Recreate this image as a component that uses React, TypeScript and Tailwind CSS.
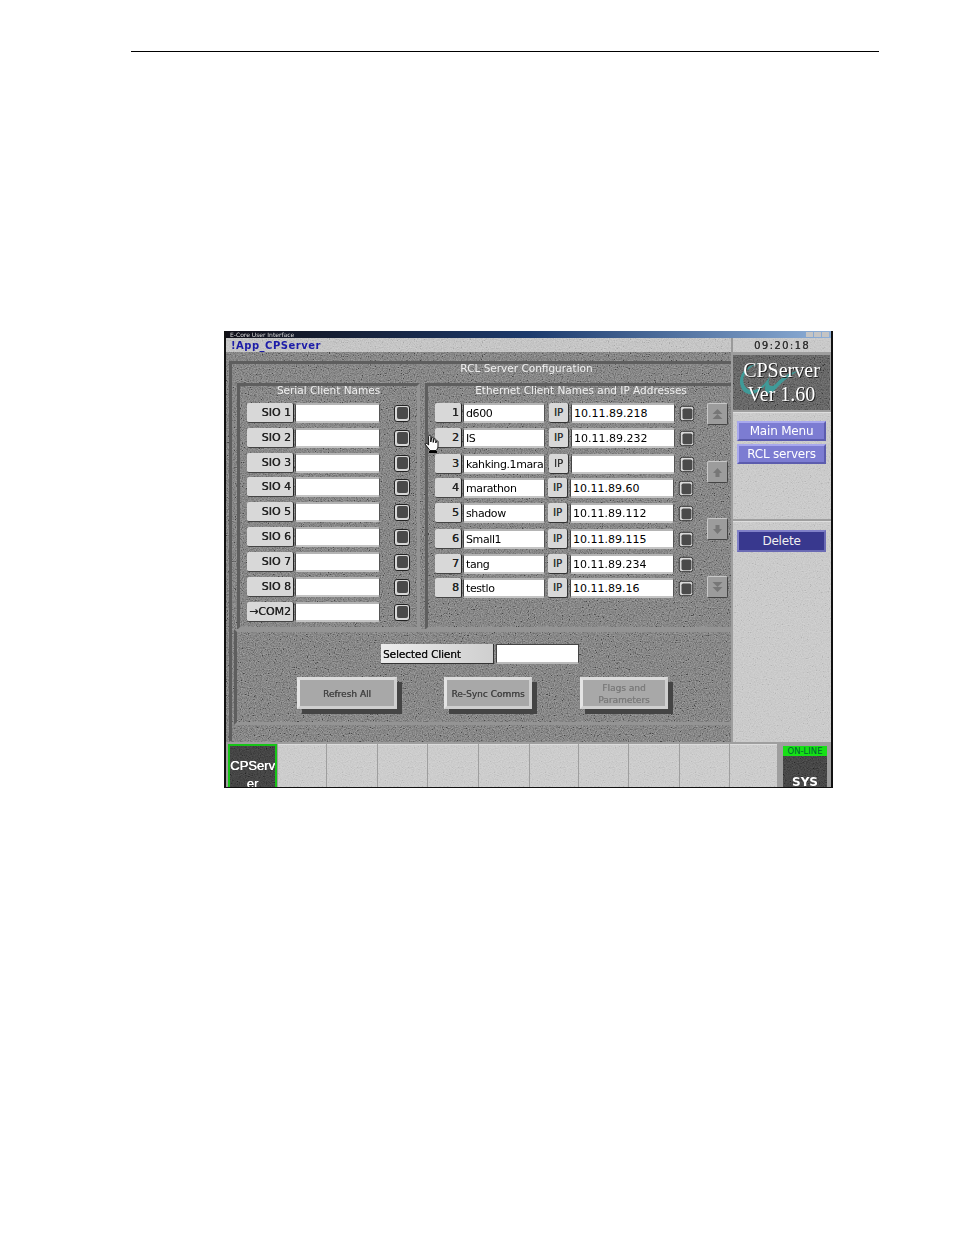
import React from 'react';

const FONT = "font-['DejaVu_Sans',sans-serif]";

const serialRows = [
  { label: 'SIO 1', mt: 'mt-0' },
  { label: 'SIO 2', mt: 'mt-[5px]' },
  { label: 'SIO 3', mt: 'mt-[5px]' },
  { label: 'SIO 4', mt: 'mt-[4px]' },
  { label: 'SIO 5', mt: 'mt-[5px]' },
  { label: 'SIO 6', mt: 'mt-[5px]' },
  { label: 'SIO 7', mt: 'mt-[5px]' },
  { label: 'SIO 8', mt: 'mt-[5px]' },
  { label: '→COM2', mt: 'mt-[5px]' },
];

const ethernetRows = [
  { n: 1, name: 'd600', ip: '10.11.89.218', mt: 'mt-0', ipMl: 'ml-[4px]' },
  { n: 2, name: 'IS', ip: '10.11.89.232', mt: 'mt-[5px]', ipMl: 'ml-[4px]' },
  { n: 3, name: 'kahking.1mara', ip: '', mt: 'mt-[6px]', ipMl: 'ml-[4px]' },
  { n: 4, name: 'marathon', ip: '10.11.89.60', mt: 'mt-[4px]', ipMl: 'ml-[3px]' },
  { n: 5, name: 'shadow', ip: '10.11.89.112', mt: 'mt-[5px]', ipMl: 'ml-[3px]' },
  { n: 6, name: 'Small1', ip: '10.11.89.115', mt: 'mt-[6px]', ipMl: 'ml-[3px]' },
  { n: 7, name: 'tang', ip: '10.11.89.234', mt: 'mt-[5px]', ipMl: 'ml-[3px]' },
  { n: 8, name: 'testlo', ip: '10.11.89.16', mt: 'mt-[4px]', ipMl: 'ml-[3px]' },
];

const Noise = ({ className = 'opacity-40' }: { className?: string }) => (
  <svg className={`absolute inset-0 w-full h-full pointer-events-none mix-blend-overlay ${className}`}>
    <rect width="100%" height="100%" filter="url(#grain)" />
  </svg>
);

const Led = () => (
  <div className="w-[16px] h-[17px] shrink-0 rounded-[3px] border border-[#222] bg-[#d8d8d8] flex items-center justify-center">
    <div className="w-[11px] h-[12px] rounded-[2px] bg-[#4a4a4a]" />
  </div>
);

const KeyLabel = ({ children, width }: { children: React.ReactNode; width: string }) => (
  <div className={`${width} h-[20px] shrink-0 rounded-[2px] bg-[#d8d8d8] border-r border-b border-r-[#222] border-b-[#444] flex items-center justify-end pr-[2px] pt-[2px] text-[11px] [text-shadow:0.3px_0_0_#222] text-[#222]`}>
    {children}
  </div>
);

const Field = ({ children, width, tight }: { children?: React.ReactNode; width: string; tight?: boolean }) => (
  <div className={`${width} h-[20px] shrink-0 rounded-[2px] bg-white border border-t-2 border-b-2 border-t-[#b4b4b4] border-l-[#444] border-r-[#555] border-b-[#c4c4c4] flex items-center pl-[2px] text-[11px] leading-none text-black whitespace-nowrap overflow-hidden ${tight ? 'tracking-[-0.4px]' : ''}`}>
    {children}
  </div>
);

const ScrollButton = ({ mt, children }: { mt: string; children: React.ReactNode }) => (
  <div className={`${mt} w-[21px] h-[22px] rounded-[2px] bg-[#9c9c9c] border border-t-[#c8c8c8] border-l-[#c8c8c8] border-r-[#444] border-b-[#444] flex items-center justify-center`}>
    <svg width="13" height="13" viewBox="0 0 13 13" fill="#777">{children}</svg>
  </div>
);

const ActionButton = ({ width, muted, children }: { width: string; muted?: boolean; children: React.ReactNode }) => (
  <div className={`${width} h-[32px] shrink-0 bg-[#a8a8a8] border-[3px] border-t-[#dcdcdc] border-l-[#e4e4e4] border-r-[#cfcfcf] border-b-[#cfcfcf] shadow-[5px_5px_0_#444] flex items-center justify-center pt-[2px] text-center text-[9px] leading-[12px] [text-shadow:0.3px_0_0_currentColor] ${muted ? 'text-[#7c7c7c]' : 'text-[#444]'}`}>
    {children}
  </div>
);

const MenuButton = ({ mt, dark, tall, children }: { mt: string; dark?: boolean; tall?: boolean; children: React.ReactNode }) => (
  <div className={`${mt} ml-[4px] w-[89px] ${tall ? 'h-[22px]' : 'h-[20px]'} border-2 flex items-center justify-center text-[12px] tracking-[-0.2px] ${dark ? 'bg-[#38388e] border-t-[#8080c8] border-l-[#8080c8] border-r-[#6a6ab4] border-b-[#6a6ab4] text-[#f0f0f0]' : 'bg-[#7c7cd2] border-t-[#a8a8ee] border-l-[#a8a8ee] border-r-[#5c5cae] border-b-[#5c5cae] text-white'}`}>
    {children}
  </div>
);

const blankTabs = ['w-[48px]', 'w-[50px]', 'w-[49px]', 'w-[50px]', 'w-[50px]', 'w-[48px]', 'w-[49px]', 'w-[50px]', 'w-[49px]', 'w-[47px]'];

export default function App() {
  return (
    <div className={`w-[954px] h-[1235px] bg-white overflow-hidden relative ${FONT}`}>
      <svg width="0" height="0" className="absolute">
        <filter id="grain">
          <feTurbulence type="fractalNoise" baseFrequency="0.85" numOctaves="2" seed="4" />
          <feColorMatrix values="0.9 0.9 0.9 0 -0.85 0.9 0.9 0.9 0 -0.85 0.9 0.9 0.9 0 -0.85 0 0 0 0 1" />
        </filter>
      </svg>

      <div className="mt-[51px] ml-[131px] w-[748px] h-px bg-black" />

      <div className="mt-[279px] ml-[224px] w-[609px] h-[457px] bg-[#9a9a9a] border-x-2 border-b border-[#111] flex flex-col overflow-hidden blur-[0.3px]">
        {/* window title */}
        <div className="h-[7px] shrink-0 bg-gradient-to-r from-[#101018] via-[#1c3a6c] to-[#8fb0d8] flex items-center justify-between overflow-hidden">
          <span className="ml-[4px] text-[6px] leading-none text-[#ddd]">E-Core User Interface</span>
          <span className="mr-[2px] flex gap-px">
            <span className="w-[7px] h-[5px] bg-[#c4c4c4]" />
            <span className="w-[7px] h-[5px] bg-[#c4c4c4]" />
            <span className="w-[7px] h-[5px] bg-[#c4c4c4]" />
          </span>
        </div>

        {/* top bar */}
        <div className="h-[14px] shrink-0 flex bg-[#9a9a9a]">
          <div className="relative w-[505px] bg-[#bcbcbc] flex items-center pl-[5px] overflow-hidden">
            <Noise className="opacity-30" />
            <span className="relative text-[10px] font-bold tracking-[0.5px] text-[#1c1ca8]">!App_CPServer</span>
          </div>
          <div className="relative ml-[2px] w-[98px] bg-[#c4c4c4] flex items-center justify-center overflow-hidden">
            <Noise className="opacity-20" />
            <span className="relative text-[10px] tracking-[1.4px] text-[#333] [text-shadow:0.3px_0_0_#333]">09:20:18</span>
          </div>
        </div>

        <div className="h-[390px] shrink-0 flex">
          {/* main area */}
          <div className="relative w-[505px] shrink-0 bg-[#727272] overflow-hidden">
            <Noise />
            <div className="relative mt-[9px] ml-[3px] h-[380px] border-t-[3px] border-l-[3px] border-[#5e5e5e] flex flex-col">
              <div className="h-[19px] shrink-0 flex items-start justify-center pl-[90px] text-[10.5px] leading-[9px] text-[#f0f0f0]">RCL Server Configuration</div>

              <div className="h-[247px] shrink-0 flex ml-[5px] gap-[5px]">
                {/* serial clients */}
                <div className="w-[183px] border-[3px] border-t-[#5e5e5e] border-l-[#5e5e5e] border-r-[#949494] border-b-[#949494]">
                  <div className="h-[11px] -mt-px text-center text-[10.5px] leading-[11px] text-[#f0f0f0]">Serial Client Names</div>
                  <div className="mt-[7px] ml-[7px] flex flex-col">
                    {serialRows.map((row) => (
                      <div key={row.label} className={`${row.mt} flex items-center`}>
                        <KeyLabel width="w-[47px]">{row.label}</KeyLabel>
                        <div className="ml-[1px]" />
                        <Field width="w-[85px]" />
                        <div className="ml-[14px]"><Led /></div>
                      </div>
                    ))}
                  </div>
                </div>

                {/* ethernet clients */}
                <div className="flex-1 border-l-[3px] border-t-[3px] border-b-[3px] border-l-[#5e5e5e] border-t-[#5e5e5e] border-b-[#949494]">
                  <div className="h-[11px] -mt-px pl-[3px] text-center text-[10.5px] leading-[11px] text-[#f0f0f0]">Ethernet Client Names and IP Addresses</div>
                  <div className="flex">
                    <div className="mt-[7px] ml-[7px] w-[266px] flex flex-col">
                      {ethernetRows.map((row) => (
                        <div key={row.n} className={`${row.mt} flex items-center`}>
                          <KeyLabel width="w-[27px]">{row.n}</KeyLabel>
                          <div className="ml-[1px]" />
                          <Field width="w-[82px]" tight>{row.name}</Field>
                          <div className={`${row.ipMl} w-[20px] h-[20px] shrink-0 rounded-[2px] bg-[#d8d8d8] border-r border-b border-[#333] flex items-center justify-center text-[10px] text-[#333] [text-shadow:0.3px_0_0_#333]`}>IP</div>
                          <div className="ml-[2px]" />
                          <Field width="w-[104px]">{row.ip}</Field>
                          <div className="ml-[4px] scale-90"><Led /></div>
                        </div>
                      ))}
                    </div>
                    <div className="ml-[6px] flex flex-col">
                      <ScrollButton mt="mt-[7px]">
                        <path d="M6.5 1 L11.5 6 H1.5 Z M6.5 6 L11.5 11 H1.5 Z" />
                      </ScrollButton>
                      <ScrollButton mt="mt-[36px]">
                        <path d="M6.5 2 L11 7 H8.5 V11 H4.5 V7 H2 Z" />
                      </ScrollButton>
                      <ScrollButton mt="mt-[35px]">
                        <path d="M6.5 11 L11 6 H8.5 V2 H4.5 V6 H2 Z" />
                      </ScrollButton>
                      <ScrollButton mt="mt-[36px]">
                        <path d="M6.5 6 L1.5 1 H11.5 Z M6.5 11 L1.5 6 H11.5 Z" />
                      </ScrollButton>
                    </div>
                  </div>
                </div>
              </div>

              {/* selected client and actions */}
              <div className="ml-[2px] mt-[-1px] h-[96px] shrink-0 border-t-[3px] border-l-[3px] border-b-[3px] border-t-[#949494] border-l-[#5e5e5e] border-b-[#949494]">
                <div className="mt-[12px] ml-[144px] flex">
                  <div className="w-[113px] h-[20px] bg-gradient-to-r from-[#ececec] to-[#cfcfcf] border-r border-b border-[#333] flex items-center pl-[2px] pt-[2px] text-[10.5px] tracking-[-0.1px] text-[#111] [text-shadow:0.3px_0_0_#111]">Selected Client</div>
                  <div className="ml-[2px] w-[83px] h-[20px] bg-white border border-[#444] border-b-2 border-b-[#bbb]" />
                </div>
                <div className="mt-[13px] ml-[60px] flex">
                  <ActionButton width="w-[100px]">Refresh All</ActionButton>
                  <div className="ml-[47px]"><ActionButton width="w-[88px]">Re-Sync Comms</ActionButton></div>
                  <div className="ml-[48px]"><ActionButton width="w-[88px]" muted>Flags and<br />Parameters</ActionButton></div>
                </div>
              </div>
            </div>
          </div>

          {/* sidebar */}
          <div className="w-[100px] shrink-0 flex flex-col bg-[#9e9e9e] pl-[2px]">
            <div className="relative mt-[3px] h-[55px] w-[97px] shrink-0 bg-[#585858] overflow-hidden">
              <Noise />
              <svg className="absolute left-[4px] top-[6px]" width="66" height="46" viewBox="0 0 60 42" fill="none">
                <path d="M20 2 C8 6 2 16 8 24 C14 31 24 24 30 14 C27 22 30 26 36 20 C41 15 47 11 56 9 C47 14 40 20 34 27 C28 33 24 28 26 22 C18 32 6 34 3 22 C1 12 8 4 20 2 Z" fill="#3f9a98" />
              </svg>
              <div className="relative text-center font-['Liberation_Serif',serif] text-[20px] leading-[24px] text-white pt-[3px] [text-shadow:1px_1px_0_#222]">
                <div>CPServer</div>
                <div>Ver 1.60</div>
              </div>
            </div>
            <div className="relative mt-[2px] h-[107px] w-[98px] shrink-0 bg-[#c4c4c4] border-t border-[#dedede] overflow-hidden">
              <Noise className="opacity-25" />
              <div className="relative flex flex-col">
                <MenuButton mt="mt-[8px]">Main Menu</MenuButton>
                <MenuButton mt="mt-[3px]">RCL servers</MenuButton>
              </div>
            </div>
            <div className="relative mt-[2px] flex-1 w-[98px] bg-[#c4c4c4] border-t border-[#dedede] overflow-hidden">
              <Noise className="opacity-25" />
              <div className="relative flex flex-col">
                <MenuButton mt="mt-[8px]" dark tall>Delete</MenuButton>
              </div>
            </div>
          </div>
        </div>

        {/* bottom tabs */}
        <div className="flex-1 flex bg-[#9e9e9e] pt-[2px] pl-[2px] overflow-hidden">
          <div className="relative w-[49px] h-[50px] shrink-0 bg-[#3a3a3a] border-[2px] border-[#16c416] overflow-hidden">
            <Noise />
            <div className="relative pt-[11px] text-center text-[13px] leading-[18px] text-white [text-shadow:0.4px_0_0_#fff] font-['Liberation_Sans',sans-serif]">CPServ<br />er</div>
          </div>
          {blankTabs.map((width, i) => (
            <div key={i} className={`relative ${width} h-[50px] shrink-0 ml-px bg-[#c6c6c6] border-t border-[#dcdcdc] overflow-hidden`}>
              <Noise className="opacity-25" />
            </div>
          ))}
          <div className="relative ml-[6px] w-[44px] h-[50px] shrink-0 bg-[#3c3c3c] overflow-hidden mt-[2px]">
            <Noise />
            <div className="relative h-[10px] bg-[#16e016] text-center text-[8.5px] leading-[10px] text-[#063]">ON-LINE</div>
            <div className="relative mt-[19px] text-center text-[12px] leading-[14px] font-bold text-white">SYS</div>
          </div>
        </div>
      </div>

      {/* hand pointer over the window */}
      <svg className="absolute left-[424px] top-[434px]" width="15" height="20" viewBox="0 0 15 20">
        <path d="M5 1.5 C5.8 1 6.8 1.4 6.8 2.5 V8 L7.6 3.6 C8.4 3 9.2 3.4 9.2 4.4 V8.4 L10.2 4.8 C11 4.4 11.8 4.8 11.8 5.8 V9 L12.6 6.8 C13.4 6.5 14 7 14 8 V12 C14 14 13 15.5 12 16.5 H6 L1.6 10.8 C1 9.8 2 9 3 9.6 L4.6 11 V2.5 Z" fill="#fff" stroke="#000" strokeWidth="0.9" />
        <rect x="5" y="17" width="8" height="2" fill="#000" />
      </svg>
    </div>
  );
}
